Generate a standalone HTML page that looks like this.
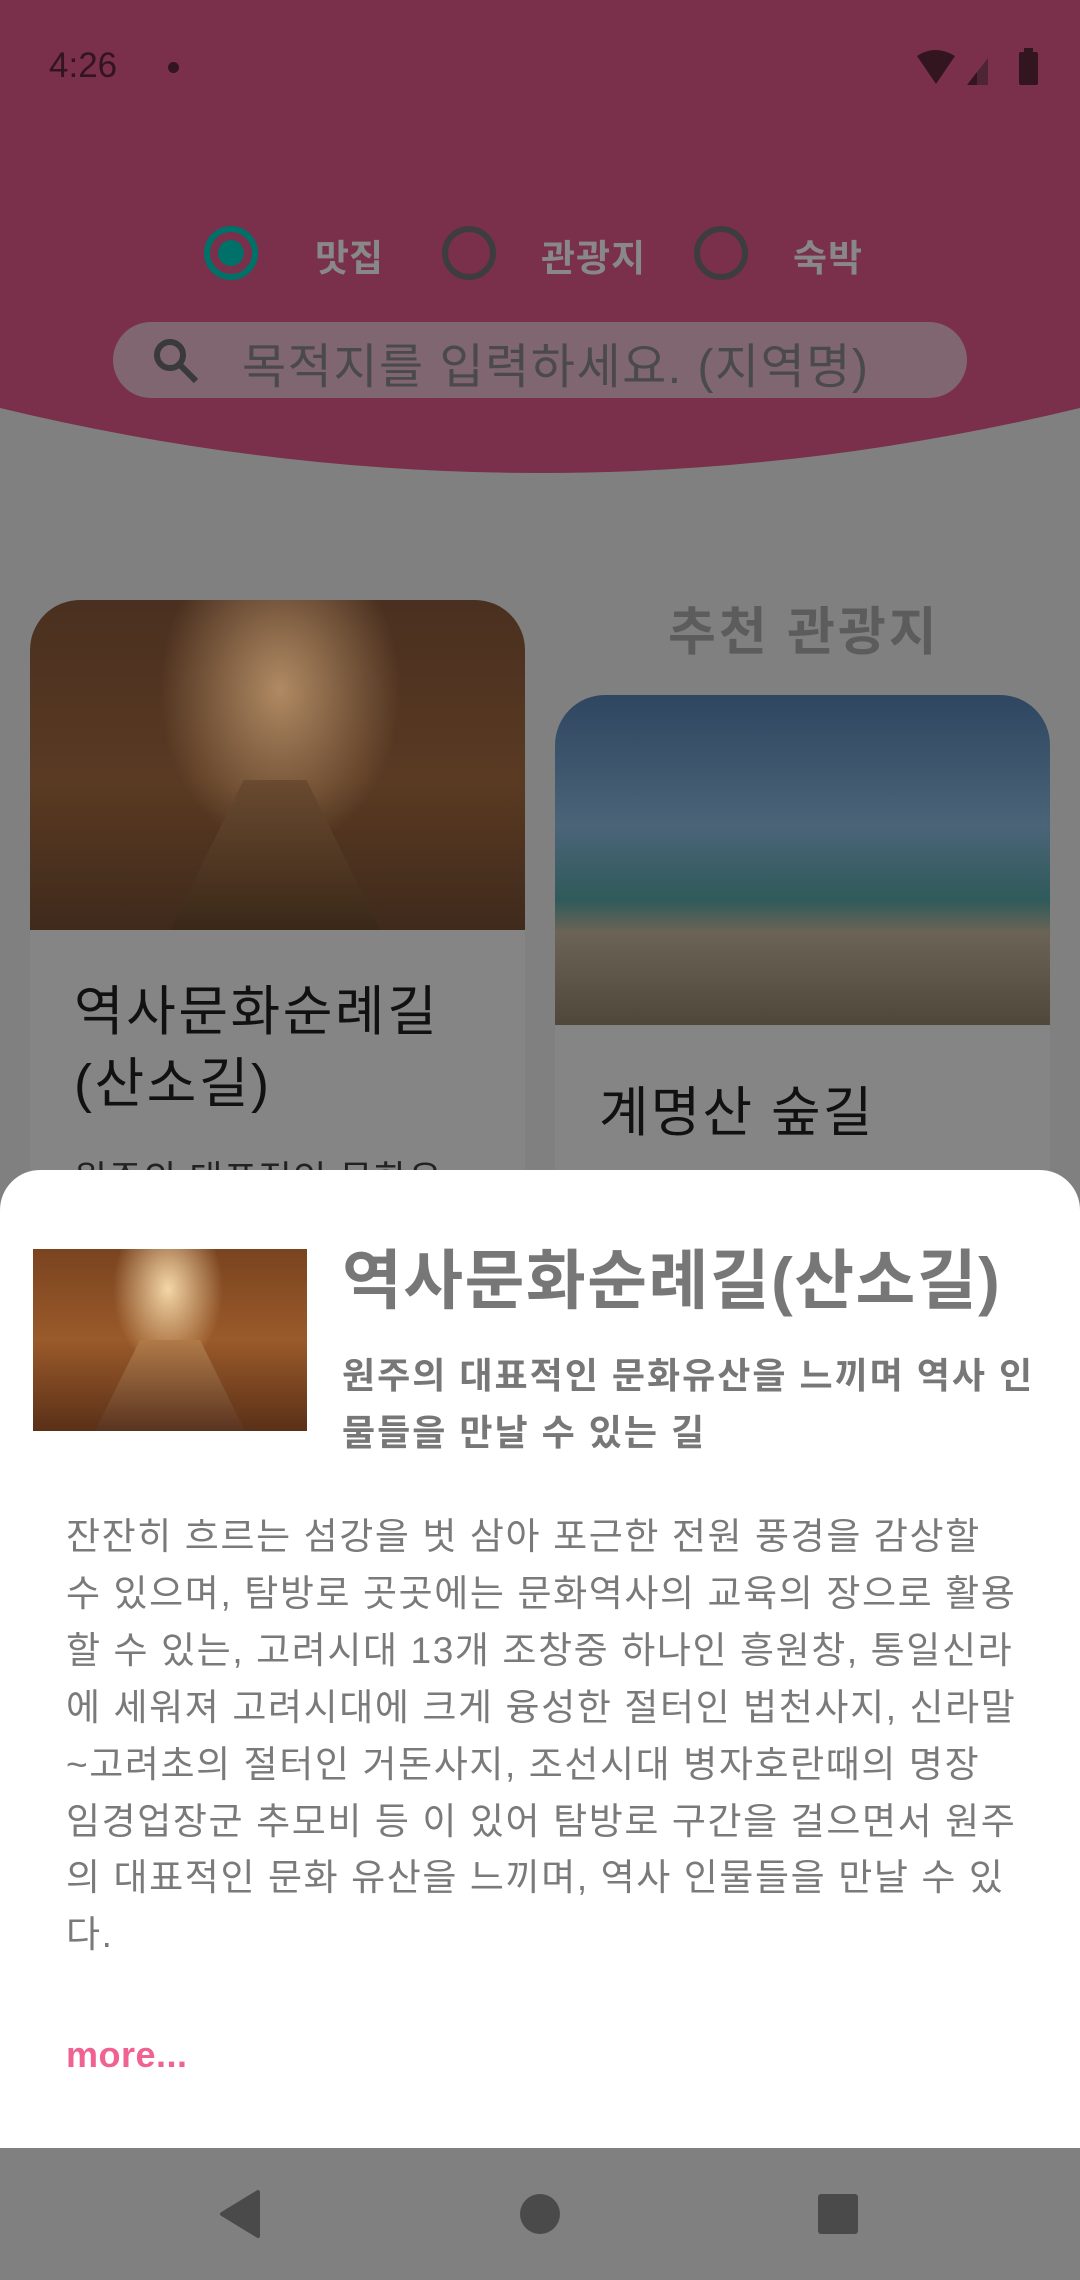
<!DOCTYPE html>
<html><head><meta charset="utf-8"><style>
*{margin:0;padding:0;box-sizing:border-box}
body{width:1080px;height:2280px;overflow:hidden;background:#808080;position:relative;font-family:"Liberation Sans","Noto Sans CJK KR",sans-serif}
.abs{position:absolute}
.t{white-space:nowrap}
</style></head><body>
<svg class="abs" style="left:0;top:0" width="1080" height="480"><path d="M0 0 H1080 V408 Q540 538 0 408 Z" fill="#7a2f4a"/></svg>
<div class="abs t" style="left:49px;top:46px;font-size:35px;color:#331520">4:26</div>
<div class="abs" style="left:168px;top:62px;width:11px;height:11px;border-radius:50%;background:#331520"></div>
<svg class="abs" style="left:915px;top:48px" width="125" height="40" viewBox="0 0 125 40"><path d="M2 8 Q20 -4 40 8 L21 36 Z" fill="#331520"/><path d="M52 37 L73 10 L73 37Z" fill="#4e2535"/><path d="M52 37 L62 24 L62 37Z" fill="#331520"/><rect x="104" y="4" width="19" height="33" rx="2" fill="#331520"/><rect x="109" y="0" width="9" height="5" fill="#331520"/></svg>
<div class="abs" style="left:204px;top:226px;width:54px;height:54px;border:6px solid #007168;border-radius:50%"></div>
<div class="abs" style="left:218px;top:240px;width:26px;height:26px;background:#007168;border-radius:50%"></div>
<div class="abs t" style="left:315px;top:228px;font-size:37px;font-weight:bold;color:#888">맛집</div>
<div class="abs" style="left:442px;top:226px;width:54px;height:54px;border:6px solid #3d3d3d;border-radius:50%"></div>
<div class="abs t" style="left:541px;top:228px;font-size:37px;font-weight:bold;color:#888;letter-spacing:1px">관광지</div>
<div class="abs" style="left:694px;top:226px;width:54px;height:54px;border:6px solid #3d3d3d;border-radius:50%"></div>
<div class="abs t" style="left:793px;top:228px;font-size:37px;font-weight:bold;color:#888;letter-spacing:1px">숙박</div>
<div class="abs" style="left:113px;top:322px;width:854px;height:76px;border-radius:38px;background:#7f6670"></div>
<svg class="abs" style="left:150px;top:335px" width="52" height="52" viewBox="0 0 52 52"><circle cx="20" cy="20" r="13" stroke="#3a3a3a" stroke-width="6" fill="none"/><path d="M29 29 L46 46" stroke="#3a3a3a" stroke-width="6"/></svg>
<div class="abs t" style="left:242px;top:327px;font-size:48px;color:#4a4a4a;letter-spacing:1.5px">목적지를 입력하세요. (지역명)</div>
<div class="abs t" style="left:668px;top:590px;font-size:52px;font-weight:bold;color:#5c5c5c;letter-spacing:3px">추천 관광지</div>
<div class="abs" style="left:30px;top:600px;width:495px;height:620px;border-radius:50px 50px 0 0;overflow:hidden;background:#858585">
<div style="height:330px;background:radial-gradient(ellipse 120px 160px at 250px 90px,#b08a63,transparent),linear-gradient(180deg,#4a3020,#5a3a22 55%,#3f2a1c);position:relative"><div class="abs" style="left:140px;top:180px;width:210px;height:150px;background:linear-gradient(#6a4a30,#3a2818);clip-path:polygon(35% 0,65% 0,100% 100%,0 100%)"></div></div>
<div class="t" style="position:absolute;left:44px;top:376px;font-size:54px;line-height:72px;color:#111;letter-spacing:2.5px">역사문화순례길<br>(산소길)</div>
<div class="t" style="position:absolute;left:44px;top:550px;font-size:36px;color:#222;letter-spacing:1.5px">원주의 대표적인 문화유</div>
</div>
<div class="abs" style="left:555px;top:695px;width:495px;height:520px;border-radius:50px 50px 0 0;overflow:hidden;background:#858585">
<div style="height:330px;background:linear-gradient(180deg,#2e4660 0%,#4b6478 40%,#2f5a5a 62%,#6b6456 72%,#4f473a 100%)"></div>
<div class="t" style="position:absolute;left:44px;top:373px;font-size:54px;color:#111;letter-spacing:2px">계명산 숲길</div>
</div>
<div class="abs" style="left:0;top:1170px;width:1080px;height:978px;background:#fff;border-radius:40px 40px 0 0"></div>
<div class="abs" style="left:33px;top:1249px;width:274px;height:182px;background:radial-gradient(ellipse 55px 80px at 135px 40px,#f4d6a6,transparent),linear-gradient(180deg,#7a4420,#9a5a2a 50%,#5a3018)"></div>
<div class="abs" style="left:95px;top:1340px;width:150px;height:91px;background:linear-gradient(#b07a48,#5a3420);clip-path:polygon(30% 0,70% 0,100% 100%,0 100%)"></div>
<div class="abs t" style="left:342px;top:1228px;font-size:65px;font-weight:bold;color:#777;letter-spacing:1.5px">역사문화순례길(산소길)</div>
<div class="abs" style="left:342px;top:1347px;font-size:36px;font-weight:bold;color:#777;line-height:57px;width:720px;letter-spacing:2px;white-space:nowrap">원주의 대표적인 문화유산을 느끼며 역사 인<br>물들을 만날 수 있는 길</div>
<div class="abs" style="left:66px;top:1509px;font-size:37px;color:#7a7a7a;line-height:56.9px;white-space:nowrap;letter-spacing:1.6px">잔잔히 흐르는 섬강을 벗 삼아 포근한 전원 풍경을 감상할<br>수 있으며, 탐방로 곳곳에는 문화역사의 교육의 장으로 활용<br>할 수 있는, 고려시대 13개 조창중 하나인 흥원창, 통일신라<br>에 세워져 고려시대에 크게 융성한 절터인 법천사지, 신라말<br>~고려초의 절터인 거돈사지, 조선시대 병자호란때의 명장<br>임경업장군 추모비 등 이 있어 탐방로 구간을 걸으면서 원주<br>의 대표적인 문화 유산을 느끼며, 역사 인물들을 만날 수 있<br>다.</div>
<div class="abs t" style="left:66px;top:2034px;font-size:36px;font-weight:bold;color:#f06292;letter-spacing:0.5px">more...</div>
<div class="abs" style="left:0;top:2148px;width:1080px;height:132px;background:#808080"></div>
<svg class="abs" style="left:0;top:2148px" width="1080" height="132"><path d="M258 44 L258 88 L222 66 Z" fill="#4a4a4a" stroke="#4a4a4a" stroke-width="4" stroke-linejoin="round"/><circle cx="540" cy="66" r="20" fill="#4a4a4a"/><rect x="818" y="46" width="40" height="40" rx="3" fill="#4a4a4a"/></svg>
</body></html>
